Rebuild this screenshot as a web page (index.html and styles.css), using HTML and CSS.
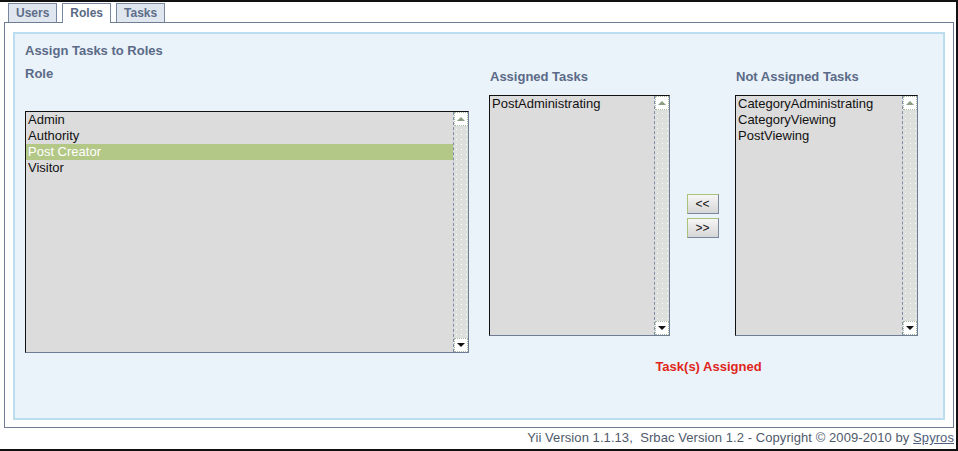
FILE: index.html
```html
<!DOCTYPE html>
<html>
<head>
<meta charset="utf-8">
<link rel="stylesheet" href="styles.css">
</head>
<body>
<div class="window">
  <div class="tabs">
    <div class="tab">Users</div>
    <div class="tab active">Roles</div>
    <div class="tab">Tasks</div>
  </div>
  <div class="panel">
    <div class="inner">
      <div class="title">Assign Tasks to Roles</div>
      <div class="cols">
        <div class="role-col">
          <div class="label">Role</div>
          <div class="list role-list">
            <div class="items">
              <div class="item">Admin</div>
              <div class="item">Authority</div>
              <div class="item selected">Post Creator</div>
              <div class="item">Visitor</div>
            </div>
            <div class="sb"><div class="sb-btn up"></div><div class="sb-track"></div><div class="sb-btn down"></div></div>
          </div>
        </div>
        <div class="tasks-group">
          <div class="labels">
            <div class="label assigned-label">Assigned Tasks</div>
            <div class="label">Not Assigned Tasks</div>
          </div>
          <div class="lists">
            <div class="list assigned-list">
              <div class="items">
                <div class="item">PostAdministrating</div>
              </div>
              <div class="sb"><div class="sb-btn up"></div><div class="sb-track"></div><div class="sb-btn down"></div></div>
            </div>
            <div class="buttons">
              <div class="btn">&lt;&lt;</div>
              <div class="btn">&gt;&gt;</div>
            </div>
            <div class="list free-list">
              <div class="items">
                <div class="item">CategoryAdministrating</div>
                <div class="item">CategoryViewing</div>
                <div class="item">PostViewing</div>
              </div>
              <div class="sb"><div class="sb-btn up"></div><div class="sb-track"></div><div class="sb-btn down"></div></div>
            </div>
          </div>
          <div class="message">Task(s) Assigned</div>
        </div>
      </div>
    </div>
  </div>
  <div class="footer">Yii Version 1.1.13,&nbsp; Srbac Version 1.2 - Copyright © 2009-2010 by <span class="link">Spyros</span></div>
</div>
</body>
</html>
```
FILE: styles.css
```css
html, body {
  margin: 0;
  padding: 0;
  background: #ffffff;
}
body {
  font-family: "Liberation Sans", Arial, sans-serif;
}
.window {
  width: 958px;
  height: 451px;
  box-sizing: border-box;
  border-top: 2px solid #111;
  border-right: 2px solid #111;
  border-bottom: 2px solid #111;
  overflow: hidden;
}
.tabs {
  display: flex;
  gap: 5px;
  margin: 1px 0 0 8px;
  height: 19px;
  position: relative;
  z-index: 2;
}
.tab {
  box-sizing: border-box;
  height: 19px;
  padding: 0 7px;
  border: 1px solid #7a889f;
  border-bottom: none;
  font-size: 12px;
  font-weight: bold;
  line-height: 18px;
  color: #5d6d89;
  background-color: #d2dbe6;
  background-image: radial-gradient(circle, #eef2f7 0.6px, transparent 0.8px);
  background-size: 2px 2px;
}
.tab.active {
  background: #ffffff;
  height: 20px;
  color: #5a6a86;
}
.panel {
  margin-left: 4px;
  width: 950px;
  height: 406px;
  box-sizing: border-box;
  border: 1px solid #6e7c94;
  padding: 9px 8px 0 8px;
  background: #fff;
}
.inner {
  width: 932px;
  height: 388px;
  box-sizing: border-box;
  border: 2px solid #bcdcef;
  background: #eaf2fa;
  padding: 10px 10px 0 10px;
}
.title, .label {
  font-size: 13px;
  font-weight: bold;
  line-height: 14px;
  color: #5a6a87;
}
.title {
  margin-bottom: 9px;
}
.cols {
  display: flex;
  align-items: flex-start;
  gap: 20px;
}
.role-col .label {
  margin-bottom: 30px;
}
.list {
  display: flex;
  box-sizing: border-box;
  border: 1px solid;
  border-color: #111 #6e7c94 #6e7c94 #111;
  background: #dcdcdc;
}
.role-list {
  width: 444px;
  height: 242px;
}
.assigned-list {
  width: 181px;
  height: 241px;
}
.free-list {
  width: 183px;
  height: 241px;
}
.items {
  flex: 1;
  font-size: 13px;
  line-height: 16px;
  color: #111;
}
.item {
  padding-left: 2px;
  white-space: nowrap;
}
.item.selected {
  background: #b3c787;
  color: #ffffff;
}
.sb {
  width: 14px;
  display: flex;
  flex-direction: column;
  border-left: 1px dashed #7f8daa;
  background-color: #dcdfdb;
  background-image: radial-gradient(circle, #ffffff 0.6px, transparent 0.9px);
  background-size: 5px 5px;
}
.sb-btn {
  height: 14px;
  box-sizing: border-box;
  background: #ffffff;
  border: 1px dotted #a7b7a0;
  display: flex;
  align-items: center;
  justify-content: center;
}
.sb-track {
  flex: 1;
}
.sb-btn.up::after {
  content: "";
  border-left: 4px solid transparent;
  border-right: 4px solid transparent;
  border-bottom: 4px solid #8c9c82;
}
.sb-btn.down::after {
  content: "";
  border-left: 4px solid transparent;
  border-right: 4px solid transparent;
  border-top: 4px solid #111;
}
.tasks-group {
  display: flex;
  flex-direction: column;
  margin-top: 3px;
}
.labels {
  display: flex;
  margin-bottom: 11px;
  padding-left: 1px;
}
.assigned-label {
  width: 246px;
}
.lists {
  display: flex;
  align-items: center;
}
.buttons {
  width: 65px;
  display: flex;
  flex-direction: column;
  align-items: center;
  gap: 4px;
}
.btn {
  width: 32px;
  height: 20px;
  box-sizing: border-box;
  border: 1px solid;
  border-color: #a8c47a #7a889f #7a889f #a8c47a;
  background: linear-gradient(#f6f6f6, #d6d6d6);
  font-size: 12px;
  line-height: 18px;
  text-align: center;
  color: #111;
}
.message {
  margin-top: 24px;
  padding-left: 10px;
  text-align: center;
  font-size: 13px;
  font-weight: bold;
  line-height: 14px;
  color: #e0261b;
}
.footer {
  text-align: right;
  padding-right: 2px;
  font-size: 13px;
  line-height: 20px;
  color: #505a6c;
  white-space: nowrap;
  letter-spacing: 0.07px;
}
.link {
  text-decoration: underline;
  color: #4e5d7a;
}
```
